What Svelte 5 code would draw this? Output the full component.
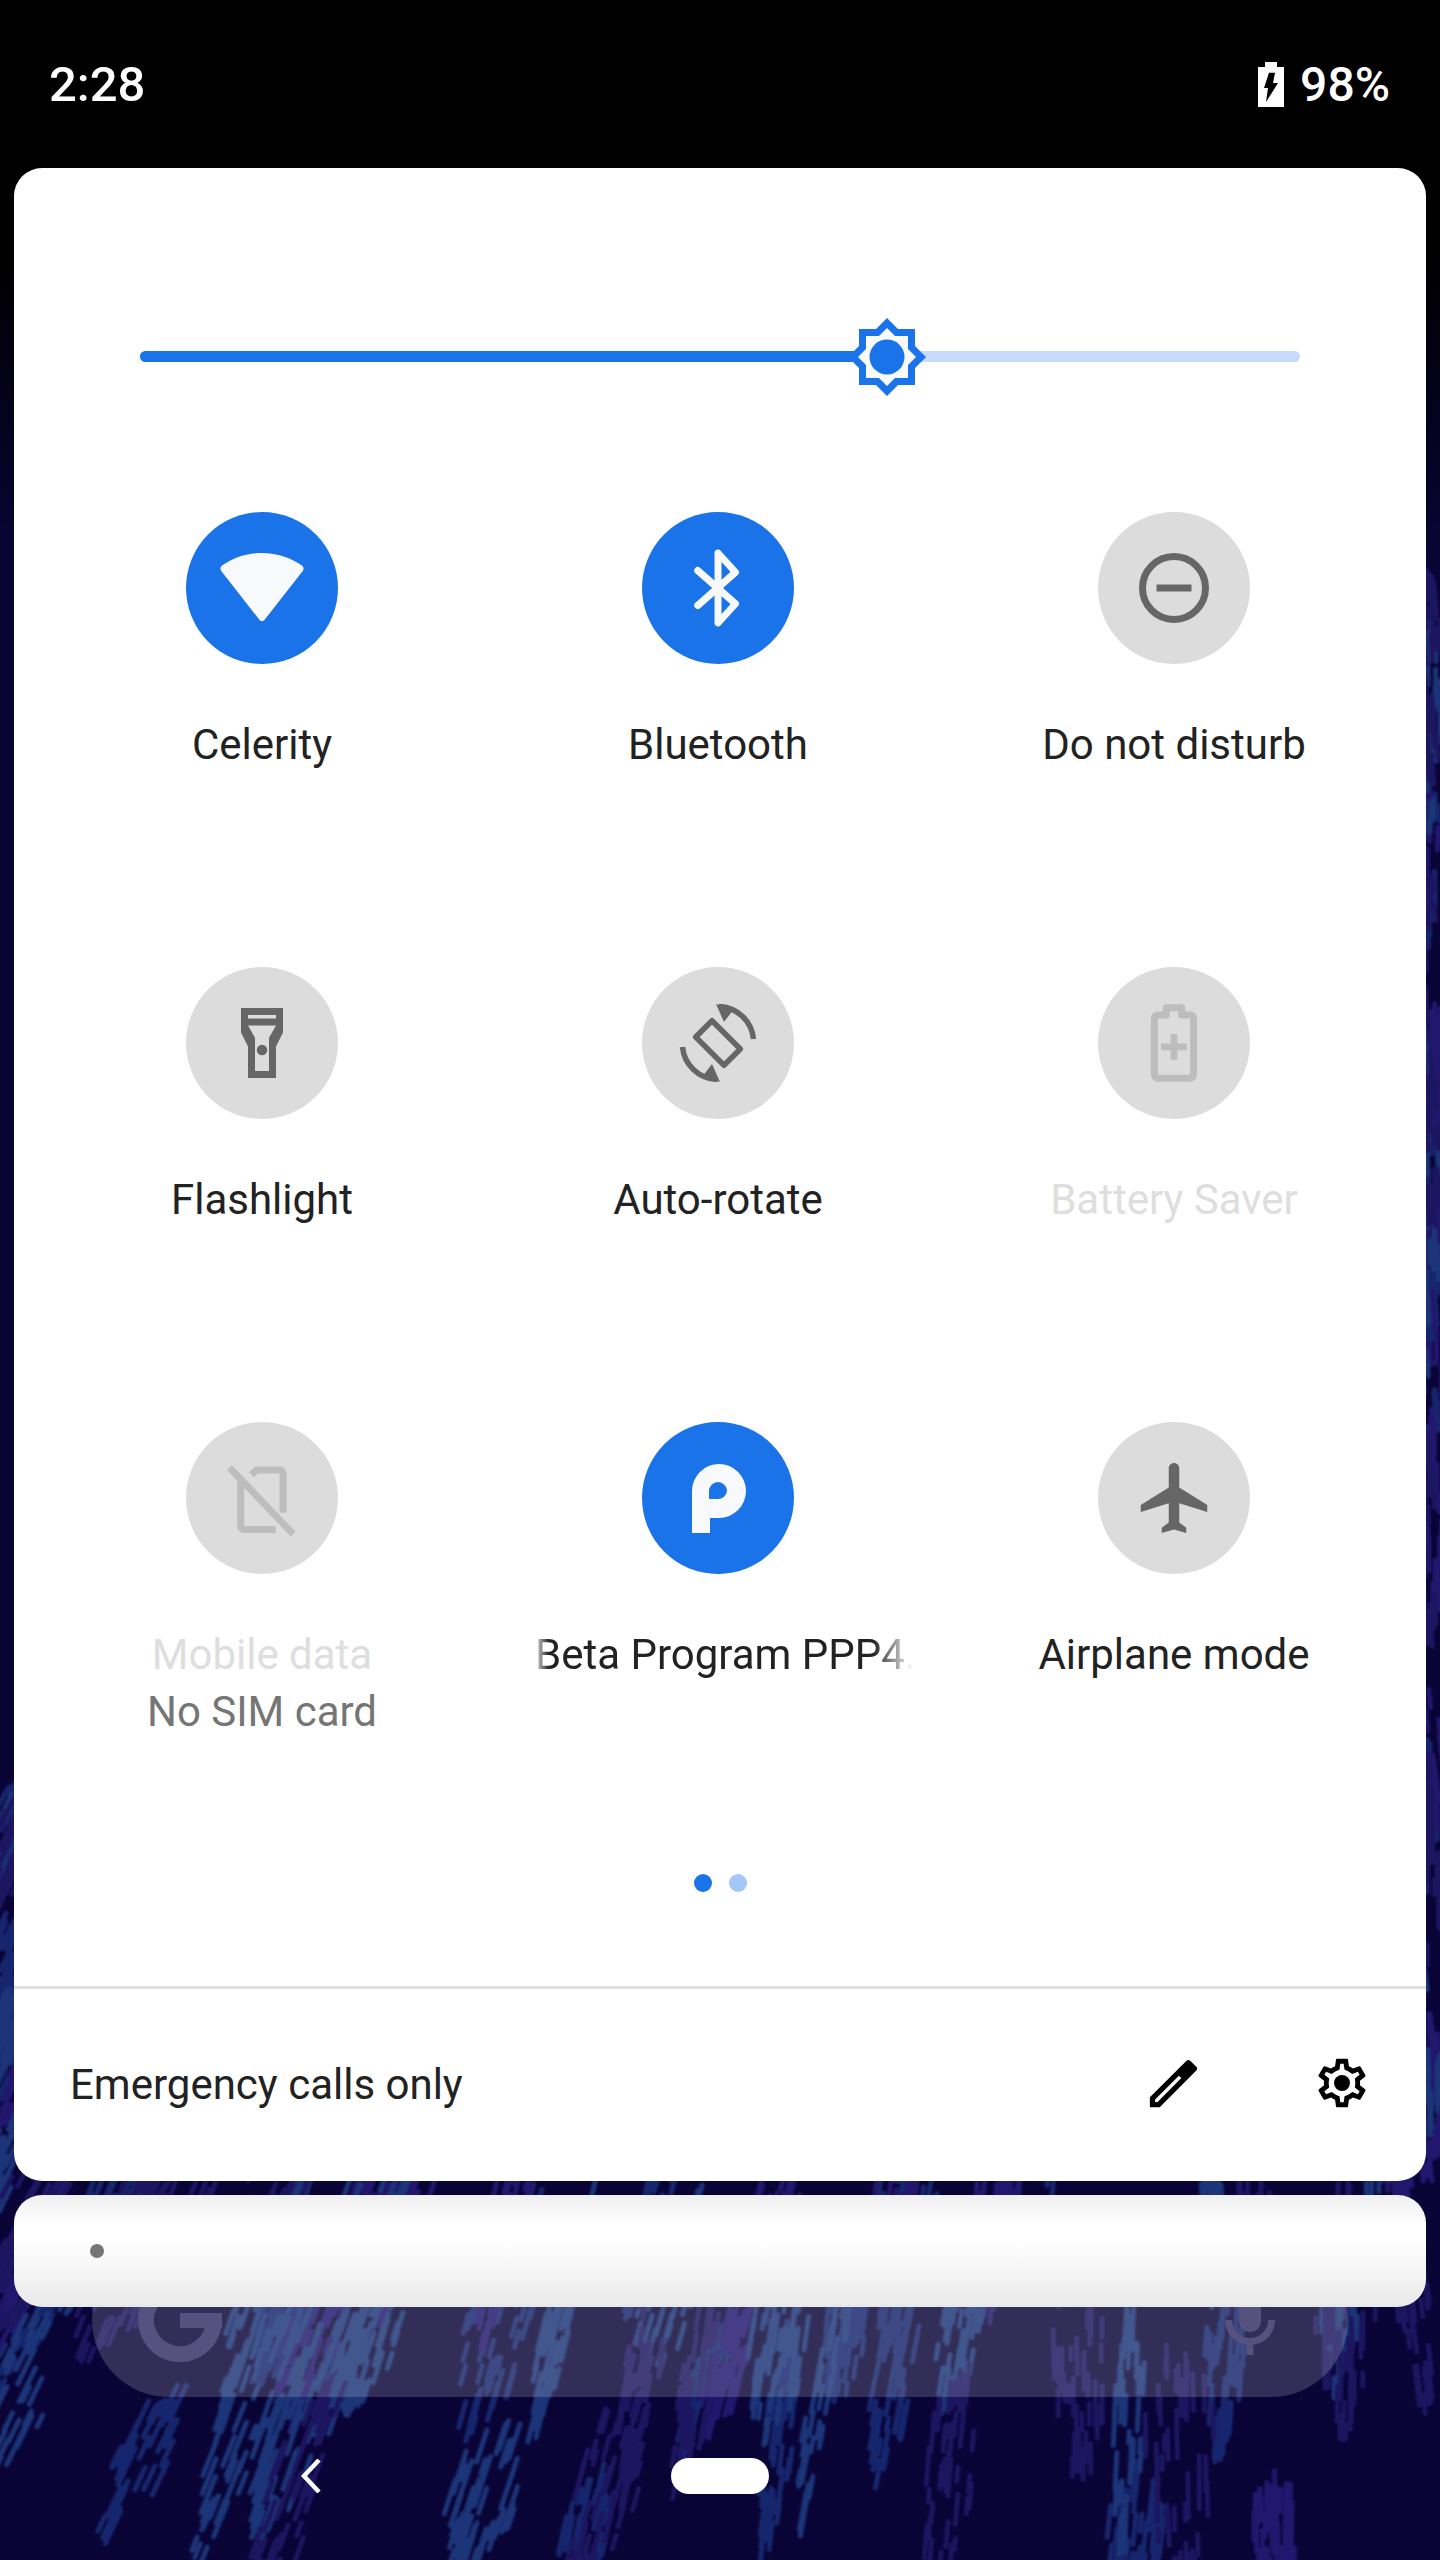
<script>
	const blue = 747;

	const tiles = [
		{
			label: 'Celerity',
			state: 'on',
			fill: 'M.6 5.6C3.6 3.4 7.6 2 12 2s8.4 1.4 11.4 3.6c.5.4.6 1 .3 1.5L12.8 21c-.4.6-1.2.6-1.6 0L.3 7.1C0 6.6.1 6 .6 5.6z'
		},
		{
			label: 'Bluetooth',
			state: 'on',
			round: true,
			stroke: 'M6.2 7l10.8 9.5L12 22V2l5 5.500L6.200 17'
		},
		{
			label: 'Do not disturb',
			state: 'off',
			fill: 'M7 11h10v2H7z',
			stroke: 'M21 12a9 9 0 1 1-18 0 9 9 0 0 1 18 0z'
		},
		{
			label: 'Flashlight',
			state: 'off',
			fill: 'M6 2h12v7l-2 4v9H8v-9L6 9V2zm2 2v1h8V4H8zm0 3l2 3.5V20h4V10.5L16 7H8z',
			dot: true
		},
		{
			label: 'Auto-rotate',
			state: 'off',
			view: '0 0 84 84',
			width: 5.5,
			fill: 'M40 3l18 5-10 13zM44 81l-18-5 10-13z',
			stroke: 'M36 19.700L64.300 48 48 64.300 19.700 36zM43 5.500A36 36 0 0 1 77.500 38M41 78.500A36 36 0 0 1 6.500 46'
		},
		{
			label: 'Battery Saver',
			state: 'disabled',
			fill: 'M11.05 9.4h1.9v2.75h2.75v1.9h-2.75v2.75h-1.9v-2.75H8.3v-1.9h2.75z',
			stroke: 'M9.8 4V1.9h4.4V4h2.4a1 1 0 0 1 1 1v16.1a1 1 0 0 1-1 1H7.4a1 1 0 0 1-1-1V5a1 1 0 0 1 1-1z'
		},
		{
			label: 'Mobile data',
			sub: 'No SIM card',
			state: 'disabled',
			fill: 'M3.4 2.6l18.2 19-1.4 1.4L2 4z',
			stroke: 'M9 5.4L10.4 4H17a1 1 0 0 1 1 1v11.2M5.9 7v13a1 1 0 0 0 1 1h9'
		},
		{
			label: 'Beta Program PPP4.',
			state: 'on',
			scroll: true,
			view: '0 0 84 84',
			fill: 'M16 77V35a27 27 0 1 1 27 27h-9v15H16zm17-34h9a9 9 0 0 0 9-8 9 9 0 0 0-18 0v8z'
		},
		{
			label: 'Airplane mode',
			state: 'off',
			view: '-.5 0 24 24',
			fill: 'M21 16v-2l-8-5V3.5c0-.83-.67-1.5-1.5-1.5S10 2.67 10 3.5V9l-8 5v2l8-2.5V19l-2 1.5V22l3.5-1 3.5 1v-1.5L13 19v-5.5l8 2.5z'
		}
	];

	// feathery wallpaper, seeded so every run draws the same picture
	let seed = 20190312;
	function rnd() {
		seed = (seed * 1664525 + 1013904223) % 4294967296;
		return seed / 4294967296;
	}

	function feather(x, y, out) {
		const angle = ((60 + (x / 1440) * 30 + rnd() * 8) * Math.PI) / 180;
		const dx = Math.cos(angle);
		const dy = -Math.sin(angle);
		const spine = 100 + rnd() * 170;
		const spread = 16 + rnd() * 22;
		const n = 34 + Math.floor(rnd() * 24);
		for (let j = 0; j < n; j++) {
			const t = rnd();
			const off = (rnd() - 0.5) * 2 * spread * Math.sin(t * Math.PI * 0.85 + 0.15);
			const sx = x + dx * spine * t - dy * off;
			const sy = y + dy * spine * t + dx * off;
			const len = 12 + rnd() * 28;
			out.push(`M${sx.toFixed(1)} ${sy.toFixed(1)}l${(dx * len).toFixed(1)} ${(dy * len).toFixed(1)}`);
		}
	}

	function buildFeathers() {
		const colors = ['#18266e', '#23176e', '#1a3478', '#1c1260'];
		const d = colors.map(() => []);
		// open wallpaper under the panels
		for (let i = 0; i < 62; i++) {
			const c = Math.floor(rnd() * colors.length);
			feather(rnd() * 1500 - 60, 2210 + rnd() * 420, d[c]);
		}
		// the two slim margins beside the panel
		for (let i = 0; i < 36; i++) {
			const c = Math.floor(rnd() * colors.length);
			feather(1405 + rnd() * 30, 760 + rnd() * 1430, d[c]);
		}
		for (let i = 0; i < 10; i++) {
			const c = Math.floor(rnd() * colors.length);
			feather(-30 + rnd() * 20, 1850 + rnd() * 340, d[c]);
		}
		return colors.map((color, i) => ({ color, d: d[i].join('') }));
	}

	const feathers = buildFeathers();
</script>

<div class="screen">
	<svg class="wallpaper" width="1440" height="2560" viewBox="0 0 1440 2560" aria-hidden="true">
		<defs>
			<linearGradient id="scrim" x1="0" y1="0" x2="0" y2="1">
				<stop offset="0" stop-color="#000" />
				<stop offset="0.1" stop-color="#000" />
				<stop offset="0.22" stop-color="#000" stop-opacity="0" />
			</linearGradient>
			<filter id="soft"><feGaussianBlur stdDeviation="0.9" /></filter>
		</defs>
		<rect width="1440" height="2560" fill="#0a0436" />
		<g filter="url(#soft)" stroke-linecap="round" stroke-width="5">
			{#each feathers as f}
				<path d={f.d} stroke={f.color} fill="none" />
			{/each}
		</g>
		<rect width="1440" height="2560" fill="url(#scrim)" />
	</svg>

	<header class="status">
		<span class="time">2:28</span>
		<div class="battery">
			<svg width="26" height="45" viewBox="0 0 26 45">
				<path
					fill="#fff"
					fill-rule="evenodd"
					d="M7 0h12v5h7v40H0V5h7V0zm4 10.7L6 26h4l-2 14 12-19h-5l2-10.300z"
				/>
			</svg>
			<span>98%</span>
		</div>
	</header>

	<section class="panel">
		<div class="slider">
			<div class="track">
				<div class="fill" style="width: {blue}px"></div>
			</div>
			<svg class="thumb" width="78" height="78" viewBox="0 0 78 78" style="left: {blue - 39}px">
				<path fill="#1a73e8" d="M11 11h17L39 0l11 11h17v17l11 11-11 11v17H50L39 78 28 67H11V50L0 39l11-11z" />
				<path fill="#f8f9fa" d="M18 18h13l8-8 8 8h13v13l8 8-8 8v13H47l-8 8-8-8H18V47l-8-8 8-8z" />
				<circle cx="39" cy="39" r="17.500" fill="#1a73e8" />
			</svg>
		</div>

		<div class="grid">
			{#each tiles as t}
				<div class="tile">
					<div class="circle {t.state}">
						<svg width="84" height="84" viewBox={t.view ?? '0 0 24 24'}>
							{#if t.fill}
								<path d={t.fill} fill="currentColor" fill-rule="evenodd" />
							{/if}
							{#if t.stroke}
								<path
									d={t.stroke}
									fill="none"
									stroke="currentColor"
									stroke-width={t.width ?? 2}
									stroke-linecap={t.round ? 'round' : 'butt'}
									stroke-linejoin="round"
								/>
							{/if}
							{#if t.dot}
								<circle cx="12" cy="14" r="1.500" fill="currentColor" />
							{/if}
						</svg>
					</div>
					<div class="label {t.state}" class:scroll={t.scroll}>{t.label}</div>
					{#if t.sub}
						<div class="sub">{t.sub}</div>
					{/if}
				</div>
			{/each}
		</div>

		<div class="dots">
			<span class="dot active"></span>
			<span class="dot"></span>
		</div>

		<div class="footer">
			<span class="carrier">Emergency calls only</span>
			<svg class="pen" width="63" height="63" viewBox="0 0 24 24">
				<path
					fill="#000"
					fill-rule="evenodd"
					d="M17.660 3c-.25 0-.51.1-.7.29L3 17.250V21h3.750L20.710 7.040c.39-.39.39-1.020 0-1.410l-2.340-2.340c-.2-.2-.45-.29-.71-.29zM14.060 9.020l.92.92L5.920 19H5v-.92z"
				/>
			</svg>
			<svg width="58" height="58" viewBox="0 0 24 24">
				<path
					fill="#000"
					fill-rule="evenodd"
					d="M19.430 12.980c.04-.32.07-.64.07-.98 0-.34-.03-.66-.07-.98l2.110-1.650c.19-.15.24-.42.12-.64l-2-3.460c-.09-.16-.26-.25-.44-.25-.06 0-.12.01-.17.03l-2.490 1c-.52-.4-1.080-.73-1.690-.98l-.38-2.650C14.460 2.180 14.250 2 14 2h-4c-.25 0-.46.18-.49.42l-.38 2.650c-.61.25-1.170.59-1.690.98l-2.490-1c-.06-.02-.12-.03-.18-.03-.17 0-.34.09-.43.25l-2 3.460c-.13.22-.07.49.12.64l2.110 1.650c-.04.32-.07.65-.07.98 0 .33.03.66.07.98l-2.110 1.650c-.19.15-.24.42-.12.64l2 3.460c.09.16.26.25.44.25.06 0 .12-.01.17-.03l2.490-1c.52.4 1.080.73 1.690.98l.38 2.650c.03.24.24.42.49.42h4c.25 0 .46-.18.49-.42l.38-2.650c.61-.25 1.170-.59 1.690-.98l2.490 1c.06.02.12.03.18.03.17 0 .34-.09.43-.25l2-3.460c.12-.22.07-.49-.12-.64l-2.110-1.650zm-1.980-1.710c.04.31.05.52.05.73 0 .21-.02.43-.05.73l-.14 1.130.89.7 1.080.84-.7 1.210-1.270-.51-1.040-.42-.9.68c-.43.32-.84.56-1.250.73l-1.060.43-.16 1.130-.2 1.350h-1.400l-.19-1.350-.16-1.130-1.060-.43c-.43-.18-.83-.41-1.230-.71l-.91-.7-1.060.43-1.270.51-.7-1.210 1.080-.84.89-.7-.14-1.130c-.03-.31-.05-.54-.05-.74s.02-.43.05-.73l.14-1.130-.89-.7-1.080-.84.7-1.210 1.270.51 1.040.42.9-.68c.43-.32.84-.56 1.250-.73l1.060-.43.16-1.130.2-1.350h1.390l.19 1.350.16 1.130 1.060.43c.43.18.83.41 1.230.71l.91.7 1.060-.43 1.270-.51.7 1.210-1.070.85-.89.7.14 1.130z"
				/>
				<circle cx="12" cy="12" r="3.300" fill="#000" />
			</svg>
		</div>
	</section>

	<section class="notice">
		<span class="notice-dot"></span>
	</section>

	<div class="search">
		<svg width="84" height="84" viewBox="0 0 84 84">
			<path d="M66 18A34 34 0 1 0 76 42" fill="none" stroke="#57517f" stroke-width="16" />
			<path d="M42 35h42v15H42z" fill="#57517f" />
		</svg>
		<svg width="50" height="90" viewBox="0 0 50 90">
			<rect x="14" y="8" width="22" height="49" rx="11" fill="#57517f" />
			<path d="M3.500 45a21.500 21.500 0 0 0 43 0M25 66v14" fill="none" stroke="#57517f" stroke-width="7" />
		</svg>
	</div>

	<nav class="nav">
		<svg class="back" width="20" height="34" viewBox="0 0 20 34">
			<path d="M18 1L3 17l15 16" fill="none" stroke="#fff" stroke-width="4.500" />
		</svg>
		<span class="home"></span>
	</nav>
</div>

<style>
	:global(body) {
		margin: 0;
		background: #000;
	}

	.screen {
		position: relative;
		width: 1440px;
		height: 2560px;
		overflow: hidden;
		font-family: Roboto, 'Liberation Sans', sans-serif;
		color: #222;
	}

	.wallpaper {
		position: absolute;
		inset: 0;
	}

	.status {
		position: relative;
		box-sizing: border-box;
		height: 168px;
		padding: 0 50px 0 49px;
		display: flex;
		justify-content: space-between;
		align-items: flex-start;
		color: #fff;
		font-size: 48px;
		font-weight: 500;
		line-height: 60px;
	}

	.time {
		margin-top: 55px;
		font-size: 49px;
	}

	.battery {
		margin-top: 55px;
		display: flex;
		align-items: flex-start;
		gap: 16px;
	}

	.battery svg {
		margin-top: 7px;
	}

	.panel {
		position: relative;
		z-index: 2;
		box-sizing: border-box;
		height: 2013px;
		margin: 0 14px;
		background: #fff;
		border-radius: 28px;
		display: flex;
		flex-direction: column;
		padding-top: 150px;
	}

	.slider {
		position: relative;
		height: 78px;
		margin: 0 126px;
		display: flex;
		align-items: center;
	}

	.track {
		width: 100%;
		height: 11px;
		margin-bottom: 1px;
		border-radius: 6px;
		background: #c6dafa;
		overflow: hidden;
	}

	.fill {
		height: 100%;
		background: #1a73e8;
	}

	.thumb {
		position: absolute;
		top: 0;
	}

	.grid {
		margin-top: 116px;
		padding: 0 24px 0 20px;
		display: grid;
		grid-template-columns: repeat(3, 456px);
		grid-template-rows: 455px 455px 440px;
	}

	.tile {
		display: flex;
		flex-direction: column;
		align-items: center;
	}

	.circle {
		width: 152px;
		height: 152px;
		border-radius: 50%;
		display: flex;
		align-items: center;
		justify-content: center;
		background: #dcdcdc;
		color: #666;
	}

	.circle.on {
		background: #1a73e8;
		color: #f8f9fa;
	}

	.circle.disabled {
		color: #bdbdbd;
	}

	.label,
	.sub {
		font-size: 42px;
		line-height: 57px;
		white-space: nowrap;
	}

	.label {
		margin-top: 52px;
	}

	.label.disabled {
		color: #dedede;
	}

	.sub {
		color: #757575;
	}

	.label.scroll {
		box-sizing: border-box;
		width: 400px;
		padding-left: 17px;
		-webkit-mask-image: linear-gradient(90deg, transparent 15px, #000 31px, #000 355px, transparent 395px);
		mask-image: linear-gradient(90deg, transparent 15px, #000 31px, #000 355px, transparent 395px);
	}

	.dots {
		margin-top: 12px;
		height: 18px;
		display: flex;
		justify-content: center;
		gap: 17px;
	}

	.dot {
		width: 18px;
		height: 18px;
		border-radius: 50%;
		background: #a3c7f6;
	}

	.dot.active {
		background: #1a73e8;
	}

	.footer {
		margin-top: 94px;
		flex: 1;
		border-top: 3px solid #e0e0e0;
		padding: 0 55px 4px 56px;
		display: flex;
		align-items: center;
	}

	.carrier {
		flex: 1;
		padding-top: 2px;
		font-size: 42px;
	}

	.pen {
		margin-right: 108px;
	}

	.notice {
		position: relative;
		z-index: 2;
		box-sizing: border-box;
		height: 112px;
		margin: 14px 14px 0;
		padding-left: 76px;
		border-radius: 28px;
		background: linear-gradient(#efefef, #fff 26%, #fff 40%, #e9e9e9 100%);
		display: flex;
		align-items: center;
	}

	.notice-dot {
		width: 14px;
		height: 14px;
		border-radius: 50%;
		background: #757575;
	}

	.search {
		position: relative;
		box-sizing: border-box;
		height: 154px;
		margin: -64px 92px 0;
		padding: 0 73px 0 46px;
		border-radius: 77px;
		background: rgba(255, 255, 255, 0.17);
		display: flex;
		justify-content: space-between;
		align-items: center;
	}

	.nav {
		position: relative;
		height: 36px;
		margin-top: 61px;
		display: grid;
		grid-template-columns: 1fr 98px 1fr;
		align-items: center;
	}

	.back {
		margin-left: 301px;
	}

	.home {
		grid-column: 2;
		height: 36px;
		border-radius: 18px;
		background: #fff;
	}
</style>
